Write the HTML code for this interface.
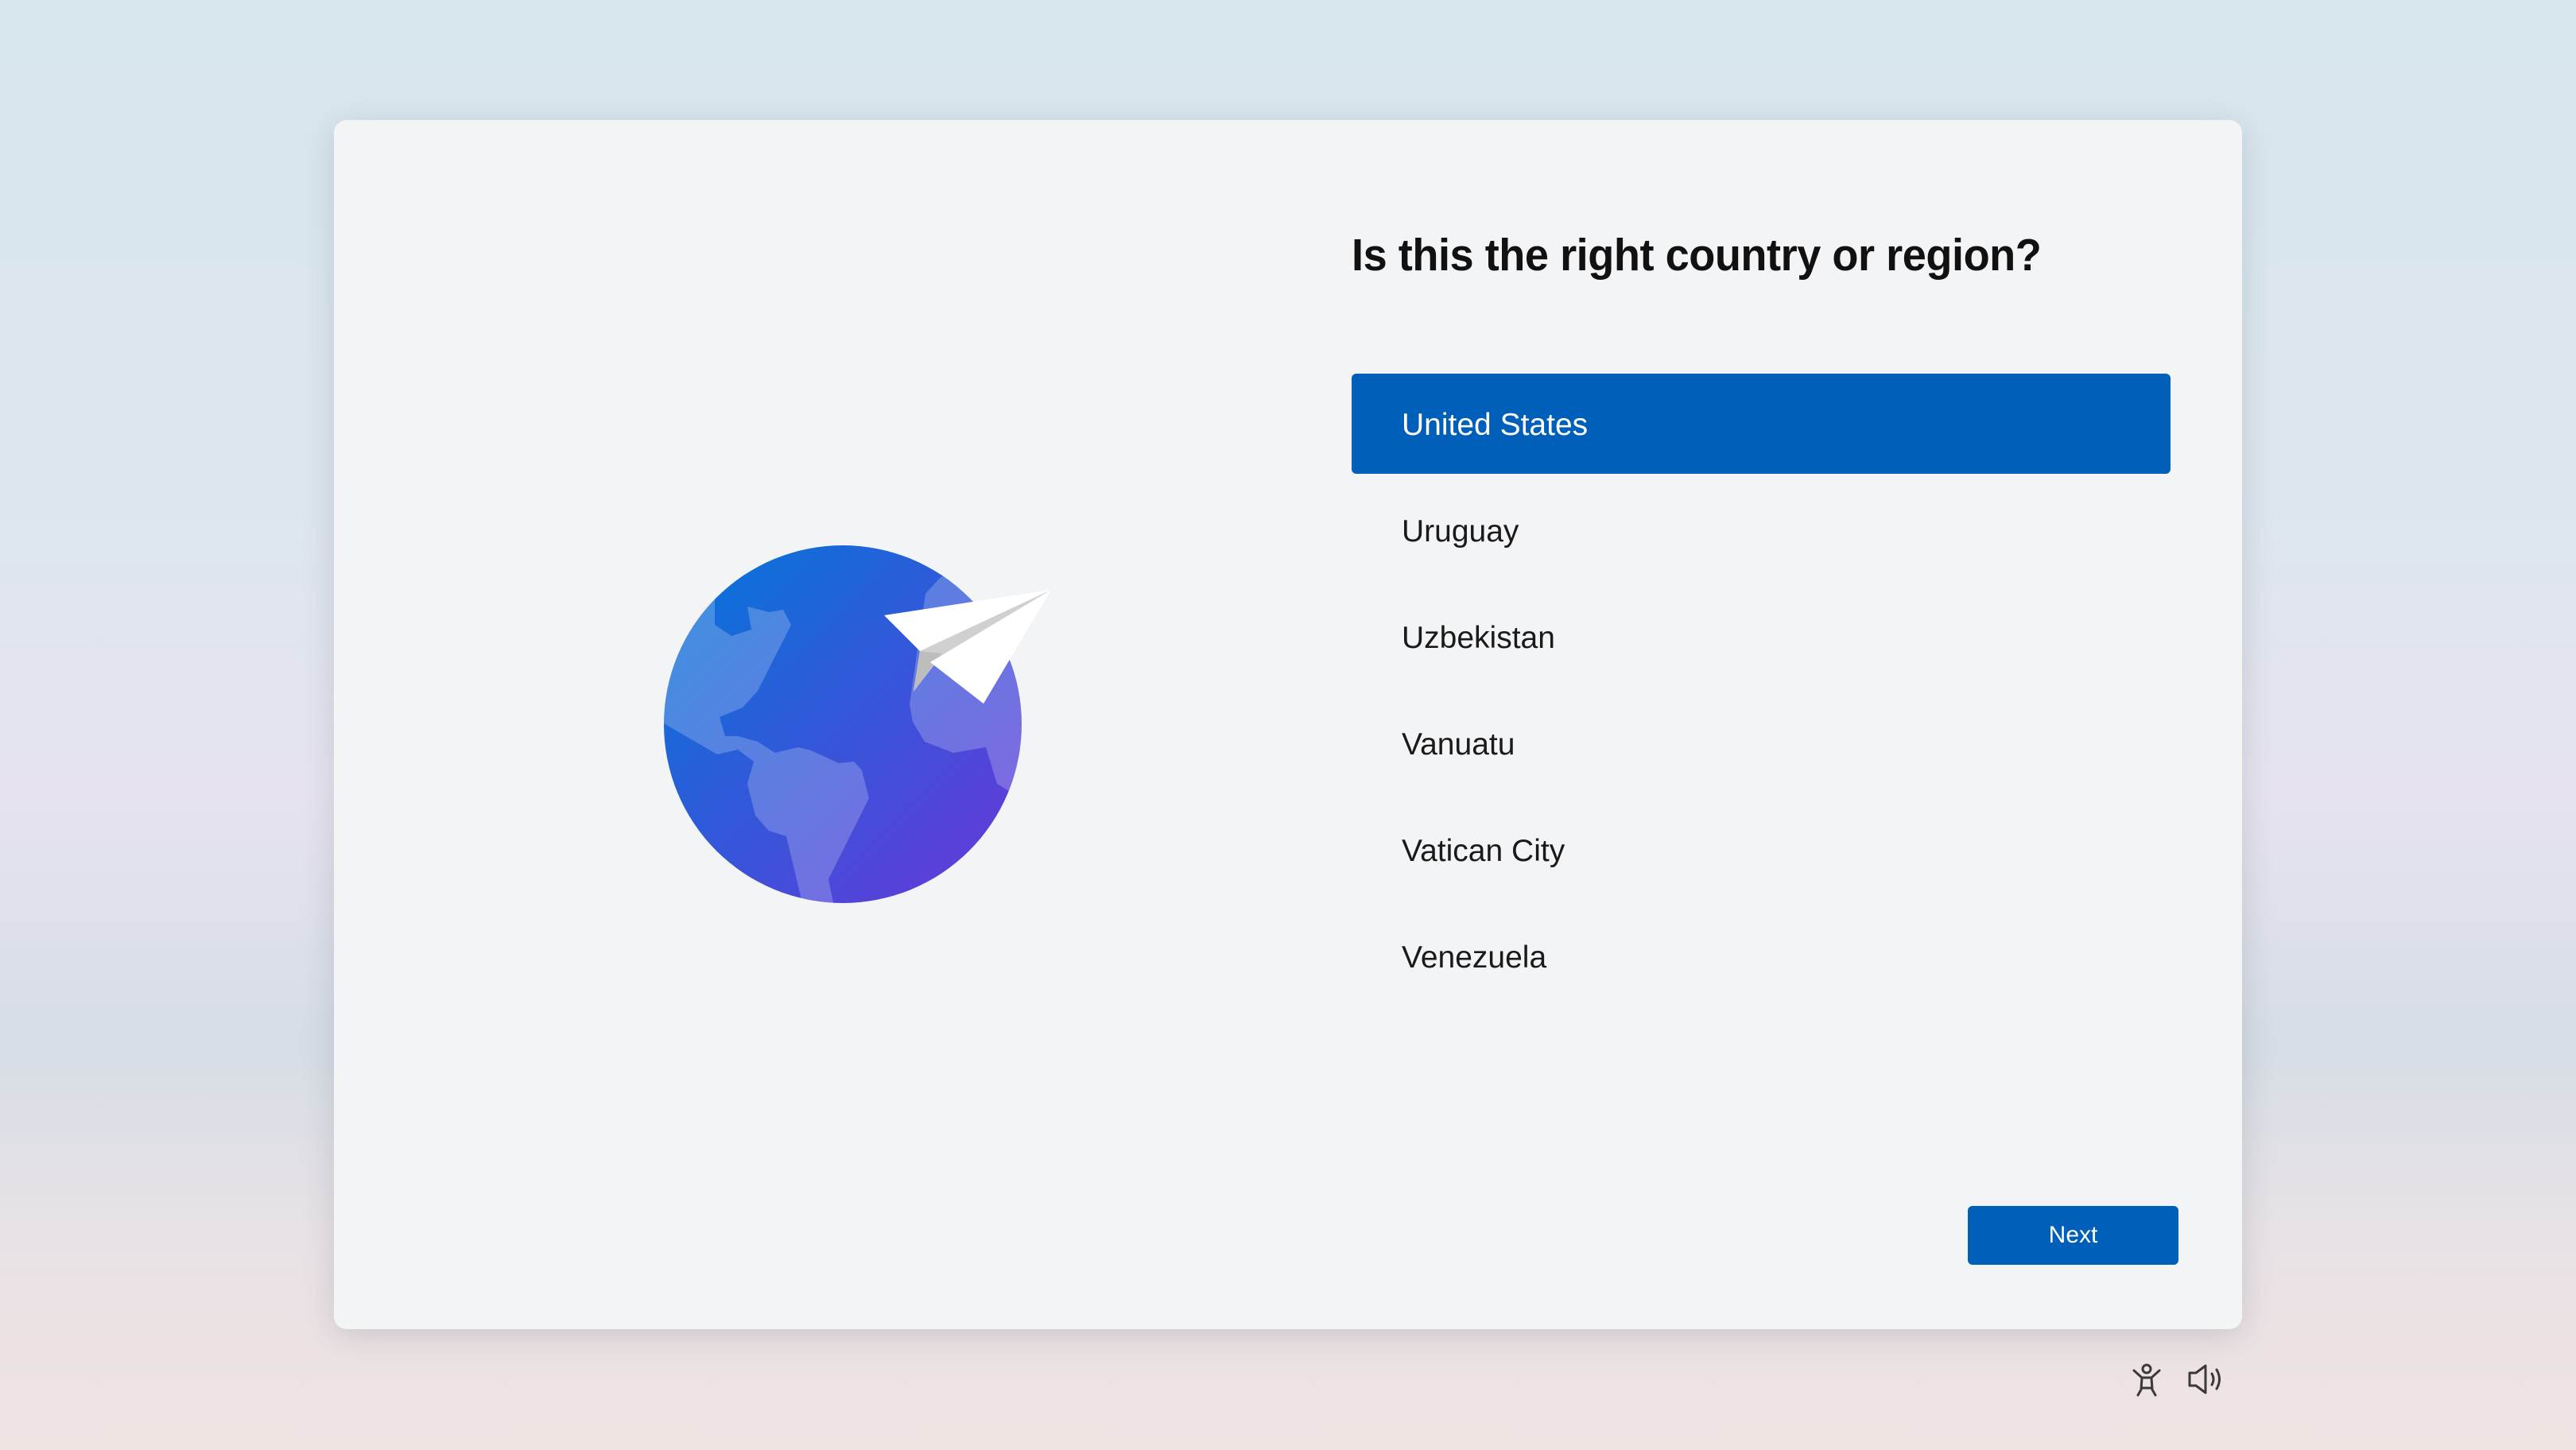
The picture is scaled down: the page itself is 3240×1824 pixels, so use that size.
<!DOCTYPE html>
<html><head><meta charset="utf-8"><style>
html,body{margin:0;padding:0;width:3240px;height:1824px;overflow:hidden;font-family:"Liberation Sans",sans-serif;}
body{background:linear-gradient(180deg,#d8e6ed 0%,#dde6ee 35%,#e6e3ee 55%,#d6dde5 72%,#e8e2e6 85%,#efe3e2 100%);position:relative;}
.card{position:absolute;left:420px;top:151px;width:2400px;height:1521px;background:#f3f4f6;border-radius:16px;box-shadow:0 8px 40px rgba(60,70,90,.18);}
.title{position:absolute;left:1700px;top:288px;font-size:57px;font-weight:bold;color:#111;white-space:nowrap;transform:scaleX(0.95);transform-origin:left top;letter-spacing:-0.5px;}
.sel{position:absolute;left:1700px;top:470px;width:1030px;height:126px;background:#005fb8;border-radius:6px;}
.item{position:absolute;left:1763px;font-size:39px;color:#1a1a1a;white-space:nowrap;transform:scaleX(1.0);transform-origin:left top;}
.btn{position:absolute;left:2475px;top:1517px;width:265px;height:74px;background:#005fb8;border-radius:6px;color:#fff;font-size:30px;text-align:center;line-height:74px;}
</style></head><body>
<div class="card"></div>
<svg width="3240" height="1824" style="position:absolute;left:0;top:0">
<defs>
<linearGradient id="g" x1="0" y1="0" x2="1" y2="1"><stop offset="0" stop-color="#0078d9"/><stop offset="1" stop-color="#6a35d9"/></linearGradient>
<clipPath id="c"><circle cx="1060" cy="911" r="225"/></clipPath>
</defs>
<circle cx="1060" cy="911" r="225" fill="url(#g)"/>
<g clip-path="url(#c)" fill="#ffffff" fill-opacity="0.22">
<path d="M820,700 L899,700 L899,786 L920,800 L945,792 L940,763 L967,770 L985,767 L995,786 L953,869 L934,890 L905,902 L912,926 L928,926 L953,933 L975,947 L1004,940 L1020,944 L1055,960 L1074,958 L1084,969 L1093,1004 L1042,1106 L1049,1140 L1010,1140 L989,1052 L967,1045 L950,1026 L940,986 L948,958 L928,943 L902,949 L835,910 L820,910 Z"/>
<path d="M1183,726 L1164,747 L1144,886 L1148,908 L1163,933 L1199,947 L1240,940 L1254,986 L1269,995 L1300,995 L1300,700 Z"/>
</g>
<polygon points="1322,742 1112,774 1157,819 1149,870 1170,833 1237,885" fill="#ffffff"/>
<polygon points="1322,742 1157,819 1149,870 1180,830" fill="#d0d0d0"/>
<polygon points="1157,819 1149,870 1185,822" fill="#bdbdbd"/>
<polygon points="1322,742 1170,833 1237,885" fill="#ffffff"/>
<g fill="none" stroke="#3a3a3a" stroke-width="3" stroke-linejoin="round" stroke-linecap="round">
<circle cx="2700" cy="1722" r="5"/>
<path d="M2684,1724 L2694,1733 L2706,1733 L2716,1724 M2694,1733 L2693,1748 L2689,1755 M2706,1733 L2707,1748 L2711,1755 M2694,1746 L2706,1746"/>
<path d="M2754,1727 L2762,1727 L2774,1718 L2774,1752 L2762,1743 L2754,1743 Z"/>
<path d="M2782,1728 Q2786,1735 2782,1742 M2788,1723 Q2795,1735 2788,1747"/>
</g>
</svg>
<div class="title">Is this the right country or region?</div>
<div class="sel"></div>
<div class="item" style="top:513px;color:#fff">United States</div>
<div class="item" style="top:647px">Uruguay</div>
<div class="item" style="top:781px">Uzbekistan</div>
<div class="item" style="top:915px">Vanuatu</div>
<div class="item" style="top:1049px">Vatican City</div>
<div class="item" style="top:1183px">Venezuela</div>
<div class="btn">Next</div>
</body></html>
